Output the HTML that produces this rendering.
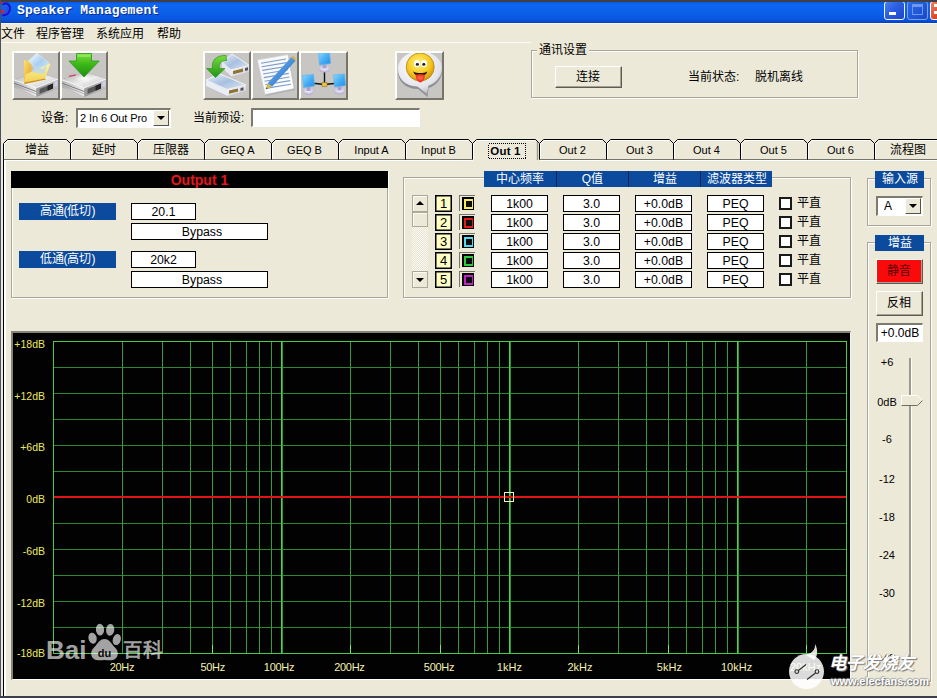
<!DOCTYPE html>
<html lang="zh-CN">
<head>
<meta charset="utf-8">
<title>Speaker Management</title>
<style>
*{box-sizing:border-box;margin:0;padding:0}
html,body{width:937px;height:698px;overflow:hidden}
body{position:relative;background:#ece9d8;font-family:"Liberation Sans",sans-serif;font-size:12px;color:#000}
.a{position:absolute}
.t{position:absolute;white-space:nowrap;line-height:1}
#top{left:0;top:0;width:937px;height:2px;background:#3d4046}
#left{left:0;top:0;width:1px;height:698px;background:#4a5060}
#bot{left:0;top:696px;width:937px;height:2px;background:#3b4049}
#title{left:1px;top:2px;width:936px;height:21px;background:linear-gradient(#0a58e0 0,#0e66f2 12%,#0c60ea 45%,#0a5ae2 76%,#084ed2 90%,#0740b8 100%)}
#ttext{left:17px;top:4px;font-family:"Liberation Mono",monospace;font-weight:bold;font-size:13px;color:#fff;letter-spacing:0.1px;text-shadow:1px 1px 0 #0a2a8a}
.menu{top:28px;font-size:12px}
.grp{position:absolute;border:1px solid #aaa798;box-shadow:1px 1px 0 #fff, inset 1px 1px 0 #fff}
.blue{position:absolute;background:#0b4a9c;color:#fff;text-align:center;font-size:12px;line-height:16px;white-space:nowrap;overflow:hidden}
.fld{position:absolute;background:#fff;border:1px solid #000;text-align:center;font-size:12.3px;line-height:16px;white-space:nowrap;overflow:hidden}
.tbtn{position:absolute;background:#c7c6c2;border-top:2px solid #fdfdfb;border-left:2px solid #fdfdfb;border-right:2px solid #77756a;border-bottom:2px solid #77756a;overflow:hidden}
.tabt{position:absolute;top:143px;width:67px;text-align:center;font-size:12px;line-height:14px;white-space:nowrap}
.sunk{position:absolute;background:#fff;border-top:2px solid #7d7b70;border-left:2px solid #7d7b70;border-right:1px solid #fff;border-bottom:1px solid #fff}
.btn{position:absolute;background:#ece9d8;border-top:1px solid #fff;border-left:1px solid #fff;border-right:1px solid #5e5c52;border-bottom:1px solid #5e5c52;box-shadow:inset -1px -1px 0 #a5a294}
.sb{position:absolute;background:#ece9d8;border:1px solid #aca999;box-shadow:inset 1px 1px 0 #fbfaf4}
</style>
</head>
<body>
<div class="a" id="title"></div>
<svg class="a" style="left:1px;top:2px" width="13" height="17" viewBox="1 2 13 17"><path d="M3.2 4.2C7 2.2 10.4 5 9.9 9.2C9.5 12.8 6.8 15.6 3 15.2" fill="none" stroke="#1a14cc" stroke-width="2.1" stroke-linecap="round"/><path d="M5.5 6.5C7.5 7 8 9.5 7 11.5C6 13 5 13.5 4 13.6" fill="none" stroke="#2a48e8" stroke-width="1.2"/><ellipse cx="2.8" cy="11.4" rx="2" ry="1.7" fill="#e01838"/><ellipse cx="2" cy="2.9" rx="1.4" ry=".8" fill="#d01848"/></svg>
<div class="t" id="ttext">Speaker Management</div>
<div class="a" style="left:884px;top:1px;width:21px;height:19px;border:1px solid #f0f4ff;border-radius:3px;background:linear-gradient(135deg,#4a80f4 0,#2a5ee0 45%,#1c48c8 100%)"></div>
<div class="a" style="left:889px;top:12px;width:7px;height:3px;background:#fff"></div>
<div class="a" style="left:907px;top:1px;width:21px;height:19px;border:1px solid #7aa2f0;border-radius:3px;background:linear-gradient(135deg,#2a6ae8 0,#1f56d8 60%,#1848c4 100%)"></div>
<div class="a" style="left:912px;top:4px;width:11px;height:11px;border:1px solid #6f98ec;border-top:3px solid #6f98ec"></div>
<div class="a" style="left:930px;top:1px;width:21px;height:19px;border:1px solid #fff;border-radius:3px;background:linear-gradient(135deg,#f08060 0,#e04c28 50%,#c03010 100%)"></div>
<div class="a" style="left:934px;top:4px;width:3px;height:3px;background:#fff"></div><div class="a" style="left:934px;top:11px;width:3px;height:3px;background:#fff"></div>
<div class="a" id="top"></div>
<div class="a" style="left:1px;top:23px;width:936px;height:1px;background:#f4f6fb"></div>
<div class="t menu" style="left:1px">文件</div>
<div class="t menu" style="left:36px">程序管理</div>
<div class="t menu" style="left:96px">系统应用</div>
<div class="t menu" style="left:157px">帮助</div>
<div class="a" style="left:1px;top:42px;width:530px;height:1px;background:#fbfaf4"></div>
<div class="tbtn" style="left:12px;top:51px;width:48px;height:49px"><svg style="position:absolute;left:0;top:0" width="44" height="45" viewBox="0 0 44 45"><defs>
<linearGradient id="dtop" x1="0" y1="0" x2="1" y2="1"><stop offset="0" stop-color="#a8a8a8"/><stop offset=".55" stop-color="#ececec"/><stop offset="1" stop-color="#c4c4c4"/></linearGradient>
<linearGradient id="dleft" x1="0" y1="0" x2="1" y2="0"><stop offset="0" stop-color="#b4b4b4"/><stop offset="1" stop-color="#efefef"/></linearGradient>
<linearGradient id="dright" x1="0" y1="0" x2="1" y2="0"><stop offset="0" stop-color="#9a9a9a"/><stop offset="1" stop-color="#c4c4c8"/></linearGradient>
<linearGradient id="fold1" x1="0" y1="0" x2="1" y2="1"><stop offset="0" stop-color="#fbe070"/><stop offset="1" stop-color="#e89c18"/></linearGradient>
<linearGradient id="fold2" x1="0" y1="0" x2="0" y2="1"><stop offset="0" stop-color="#fff6a8"/><stop offset="1" stop-color="#f0d050"/></linearGradient>
<linearGradient id="pap" x1="0" y1="0" x2="1" y2="1"><stop offset="0" stop-color="#ffffff"/><stop offset=".5" stop-color="#a8d0f0"/><stop offset="1" stop-color="#d8ecfa"/></linearGradient>
</defs>
<g id="drv">
<path d="M0 26.5L22.5 19L44 26L44 35L22.5 43.8L0 34Z" fill="#8e8e8e"/>
<path d="M0 26.5L22.5 19L44 26L22.5 34.8Z" fill="url(#dtop)"/>
<path d="M0 26.8L22.5 34.8V43.8L0 34Z" fill="url(#dleft)"/>
<path d="M22.5 34.8L44 26V35L22.5 43.8Z" fill="url(#dright)"/>
<path d="M25.5 36L39 30.6V35.6L25.5 41Z" fill="#5a5a5a"/>
<path d="M33.5 32.8L39 30.6V35.6L33.5 37.800Z" fill="#262626"/>
<path d="M0 30.2L22.5 38.6" stroke="#707070" stroke-width=".9" fill="none"/>
<path d="M1 32.6L22.5 41" stroke="#9a9a9a" stroke-width=".7" fill="none"/>
<path d="M0 26.8L22.5 34.8L44 26" stroke="#fafafa" stroke-width="1" fill="none"/>
<path d="M40.5 29L43.5 27.8V32.8L40.5 34Z" fill="#d0d0ec"/>
</g>

<path d="M10 7L16.5 8.2L18.5 24.5L10 29Z" fill="url(#fold1)"/>
<path d="M23 0L35 10.2L26 19.5L14.5 8Z" fill="url(#pap)" stroke="#e8f0f8" stroke-width=".6"/>
<path d="M11.5 21.5L36.5 10.5L31 25.5L10 29.5Z" fill="url(#fold2)"/>
<path d="M17 19L23 12L28 16.5L33 12.2L30 21Z" fill="#b8d8f0" opacity=".8"/>
<path d="M10 29.5L31 25.5L32 26.5L10.5 31Z" fill="#d09010"/>
</svg>
</div>
<div class="tbtn" style="left:60px;top:51px;width:48px;height:49px"><svg style="position:absolute;left:0;top:0" width="44" height="45" viewBox="0 0 44 45"><defs>
<linearGradient id="garr" x1="0" y1="0" x2="0" y2="1"><stop offset="0" stop-color="#7ee040"/><stop offset=".45" stop-color="#3cb818"/><stop offset="1" stop-color="#1f9010"/></linearGradient>
<radialGradient id="glow" cx=".5" cy=".5" r=".5"><stop offset="0" stop-color="#fff" stop-opacity=".9"/><stop offset="1" stop-color="#fff" stop-opacity="0"/></radialGradient>
</defs>
<use href="#drv"/>
<ellipse cx="22" cy="25.500" rx="10" ry="4" fill="url(#glow)"/>
<path d="M7 23.3L13.8 21.9" stroke="#d04060" stroke-width="1.3"/>
<path d="M14.5 0.5H29.5V8H37.2L22 24L7 8H14.5Z" fill="url(#garr)" stroke="#2a9818" stroke-width=".8"/>
<path d="M15.5 1.5H28.5V4H15.5Z" fill="#a0f070" opacity=".6"/>
</svg>
</div>
<div class="tbtn" style="left:203px;top:51px;width:48px;height:49px"><svg style="position:absolute;left:0;top:0" width="44" height="45" viewBox="0 0 44 45"><defs>
<linearGradient id="wbox" x1="0" y1="0" x2="1" y2="1"><stop offset="0" stop-color="#ffffff"/><stop offset="1" stop-color="#c8c8d8"/></linearGradient>
<linearGradient id="wtop" x1="0" y1="0" x2="1" y2="1"><stop offset="0" stop-color="#e8eef8"/><stop offset=".5" stop-color="#a8c0e0"/><stop offset="1" stop-color="#e0e8f4"/></linearGradient>
<linearGradient id="garr2" x1="0" y1="0" x2="0" y2="1"><stop offset="0" stop-color="#78dc40"/><stop offset="1" stop-color="#1f9414"/></linearGradient>
</defs>
<g>
<path d="M17 9L27 1L44.5 12.5V19L25 23.5L17 15Z" fill="#b0b0c0"/>
<path d="M17 9L27 1L44.5 12.5L26 17Z" fill="url(#wtop)" stroke="#fff" stroke-width=".8"/>
<path d="M17 9L26 17V23.5L17 15Z" fill="#e8e8f0"/>
<path d="M26 17L44.5 12.5V19L26 23.5Z" fill="url(#wbox)"/>
<path d="M28 18L38 15.6V18.8L28 21.2Z" fill="#8a7430"/>
<path d="M40 15L43 14.3V17.3L40 18Z" fill="#555"/>
</g>
<g>
<path d="M1 27L15 21L41 32V38L21 43L1 33Z" fill="#a8a8b8"/>
<path d="M1 27L15 21L41 32L22 36.5Z" fill="url(#wtop)" stroke="#fff" stroke-width=".8"/>
<path d="M1 27L22 36.5V43L1 33Z" fill="#ececf4"/>
<path d="M22 36.5L41 32V38L22 43Z" fill="url(#wbox)"/>
<path d="M24 37.6L33 35.4V38.6L24 40.8Z" fill="#8a7430"/>
<path d="M35.5 35L38.5 34.3V37.3L35.5 38Z" fill="#555"/>
</g>
<path d="M21 2.5C11 2 6 8 7.5 15.5H1.5L10.5 24.5L20 15.5H14.5C13.5 10.5 16 7.5 21.5 7.5Z" fill="url(#garr2)" stroke="#2a9818" stroke-width=".7"/>
</svg>
</div>
<div class="tbtn" style="left:251px;top:51px;width:48px;height:49px"><svg style="position:absolute;left:0;top:0" width="44" height="45" viewBox="0 0 44 45"><defs>
<linearGradient id="ppr" x1="0" y1="0" x2="1" y2="1"><stop offset="0" stop-color="#f4f6fa"/><stop offset="1" stop-color="#ffffff"/></linearGradient>
<linearGradient id="pen" x1="0" y1="0" x2="1" y2="1"><stop offset="0" stop-color="#92c6f4"/><stop offset=".5" stop-color="#4a90dc"/><stop offset="1" stop-color="#2a64b4"/></linearGradient>
</defs>
<path d="M5.5 8.5L36 3.5L42 37L13 43Z" fill="#9a9a9a" opacity=".5"/>
<path d="M4.3 6.8L35 1.6L41 35.6L12 41.6Z" fill="url(#ppr)" stroke="#c8c8d0" stroke-width=".6"/>
<g stroke="#7c9cc8" stroke-width="1.1">
<path d="M8 10.2L33 6"/><path d="M8.7 13.8L33.7 9.6"/><path d="M9.4 17.4L34.4 13.2"/><path d="M10.1 21L35.1 16.8"/><path d="M10.8 24.6L35.8 20.4"/><path d="M11.5 28.2L36.5 24"/><path d="M12.2 31.8L37.2 27.6"/><path d="M12.9 35.4L37.9 31.2"/>
</g>
<path d="M38.2 4.2L42.6 7.8L19 33.8L14.6 30.2Z" fill="url(#pen)"/>
<path d="M38.2 4.2C39.5 2 43.5 4.5 42.6 7.8Z" fill="#d8b040"/>
<path d="M14.6 30.2L19 33.8L12.8 36.2Z" fill="#d8b848"/>
<path d="M13.6 34.2L14.8 35.4L12.8 36.2Z" fill="#444"/>
</svg>
</div>
<div class="tbtn" style="left:299px;top:51px;width:49px;height:49px"><svg style="position:absolute;left:0;top:0" width="45" height="45" viewBox="0 0 45 45"><defs>
<linearGradient id="scr" x1="0" y1="0" x2="1" y2="1"><stop offset="0" stop-color="#90d8ff"/><stop offset=".5" stop-color="#48b0f4"/><stop offset="1" stop-color="#2488e0"/></linearGradient>
<radialGradient id="bse" cx=".5" cy=".4" r=".6"><stop offset="0" stop-color="#ffffff"/><stop offset="1" stop-color="#b0a8d0"/></radialGradient>
<g id="mon"><ellipse cx="0" cy="9.5" rx="6" ry="3.4" fill="url(#bse)"/><path d="M-2 5H2V9H-2Z" fill="#a8a0d0"/><path d="M-6 -6.5L5 -7.5L6 4L-5 5.5Z" fill="url(#scr)" stroke="#5ab4f4" stroke-width=".7"/></g>
</defs>
<path d="M23.5 17V31.5M10 30L23.5 31.5L38 30" stroke="#111" stroke-width="1.4" fill="none"/>
<rect x="21" y="29.5" width="5" height="4" fill="#e8c050" stroke="#a07818" stroke-width=".6"/>
<use href="#mon" x="23.5" y="6.5"/>
<use href="#mon" x="7.5" y="29"/>
<use href="#mon" x="38.5" y="28.5"/>
</svg>
</div>
<div class="tbtn" style="left:395px;top:51px;width:49px;height:49px"><svg style="position:absolute;left:0;top:0" width="45" height="45" viewBox="0 0 45 45"><defs>
<radialGradient id="bub" cx=".4" cy=".3" r=".8"><stop offset="0" stop-color="#ffffff"/><stop offset=".7" stop-color="#e4e4ec"/><stop offset="1" stop-color="#a8a8b0"/></radialGradient>
<radialGradient id="face" cx=".45" cy=".35" r=".7"><stop offset="0" stop-color="#fff27a"/><stop offset=".6" stop-color="#f6c820"/><stop offset="1" stop-color="#c88a08"/></radialGradient>
</defs>
<g transform="translate(0,1)">
<path d="M23 0C36 0 45 7.5 45 17C45 25 39 31.5 31.5 34L30.5 43L21 35C8 35 1 27 1 17.500C1 7.500 10 0 23 0Z" fill="#909094"/>
<path d="M23 -2.5C36 -2.5 45 5 45 14.5C45 22.5 39 29 31.5 31.5L30 40L20.5 32.5C8 32 1 24.5 1 15C1 5 10 -2.5 23 -2.5Z" fill="url(#bub)"/>
<circle cx="23.2" cy="13" r="14" fill="url(#face)" stroke="#b88810" stroke-width=".8"/>
<ellipse cx="20" cy="9.6" rx="3" ry="3.6" fill="#fff"/><ellipse cx="27" cy="9.6" rx="3" ry="3.6" fill="#fff"/>
<ellipse cx="20.4" cy="10.4" rx="1.6" ry="1.3" fill="#1a2030"/><ellipse cx="26.8" cy="10.4" rx="1.6" ry="1.3" fill="#1a2030"/>
<path d="M16.2 17.4C20 19.6 26.5 19.6 30.4 17.4C29.5 20.5 27 22 23.3 22C19.6 22 17 20.5 16.2 17.4Z" fill="#2a1408"/>
<path d="M18.8 20.8C21 20 25.5 20 27.8 20.8C28 25 26 28.4 23.3 28.4C20.6 28.4 18.6 25 18.8 20.8Z" fill="#f03c28"/>
<path d="M20.5 22.5C22 22 24.5 22 26 22.5C26 24.5 25 26 23.3 26C21.6 26 20.5 24.5 20.5 22.5Z" fill="#ff6848" opacity=".8"/>
</g></svg>
</div>
<div class="grp" style="left:531px;top:50px;width:327px;height:48px"></div>
<div class="t" style="left:537px;top:44px;background:#ece9d8;padding:0 2px;font-size:12px">通讯设置</div>
<div class="btn" style="left:555px;top:66px;width:67px;height:22px"></div>
<div class="t" style="left:555px;top:71px;width:66px;text-align:center;font-size:12px">连接</div>
<div class="t" style="left:688px;top:71px;font-size:12px">当前状态:</div>
<div class="t" style="left:755px;top:71px;font-size:12px">脱机离线</div>
<div class="t" style="left:41px;top:112px;font-size:12px">设备:</div>
<div class="sunk" style="left:76px;top:108px;width:95px;height:20px"></div>
<div class="t" style="left:80px;top:113px;font-size:11px;letter-spacing:-0.1px">2 In 6 Out Pro</div>
<div class="a" style="left:153px;top:110px;width:16px;height:16px;background:#ece9d8;border-top:1px solid #fff;border-left:1px solid #fff;border-right:1px solid #55534a;border-bottom:1px solid #55534a"></div>
<div class="a" style="left:157px;top:116px;width:0;height:0;border-left:4px solid transparent;border-right:4px solid transparent;border-top:4px solid #000"></div>
<div class="t" style="left:193px;top:112px;font-size:12px">当前预设:</div>
<div class="sunk" style="left:251px;top:108px;width:169px;height:19px"></div>
<div class="a" style="left:3px;top:159px;width:1px;height:537px;background:#000"></div><div class="a" style="left:4px;top:160px;width:2px;height:536px;background:#fff"></div>
<svg class="a" style="left:0;top:136px" width="937" height="26" viewBox="0 136 937 26">
<path d="M3.5 162V159.5H472M539 159.5H937" fill="none" stroke="#000" stroke-width="1"/>
<path d="M4.5 162V160.5H473M540 160.5H937" fill="none" stroke="#fff" stroke-width="1"/>
<path d="M3.5 159.5V143.5L7.5 139.5H66.5L70.5 143.5V159.5" fill="#ece9d8" stroke="#000"/>
<path d="M4.5 159V144L8 140.5H66" fill="none" stroke="#fff"/>
<path d="M70.5 159.5V143.5L74.5 139.5H133.5L137.5 143.5V159.5" fill="#ece9d8" stroke="#000"/>
<path d="M71.5 159V144L75 140.5H133" fill="none" stroke="#fff"/>
<path d="M137.5 159.5V143.5L141.5 139.5H200.5L204.5 143.5V159.5" fill="#ece9d8" stroke="#000"/>
<path d="M138.5 159V144L142 140.5H200" fill="none" stroke="#fff"/>
<path d="M204.5 159.5V143.5L208.5 139.5H267.5L271.5 143.5V159.5" fill="#ece9d8" stroke="#000"/>
<path d="M205.5 159V144L209 140.5H267" fill="none" stroke="#fff"/>
<path d="M271.5 159.5V143.5L275.5 139.5H334.5L338.5 143.5V159.5" fill="#ece9d8" stroke="#000"/>
<path d="M272.5 159V144L276 140.5H334" fill="none" stroke="#fff"/>
<path d="M338.5 159.5V143.5L342.5 139.5H401.5L405.5 143.5V159.5" fill="#ece9d8" stroke="#000"/>
<path d="M339.5 159V144L343 140.5H401" fill="none" stroke="#fff"/>
<path d="M405.5 159.5V143.5L409.5 139.5H468.5L472.5 143.5V159.5" fill="#ece9d8" stroke="#000"/>
<path d="M406.5 159V144L410 140.5H468" fill="none" stroke="#fff"/>
<path d="M472.5 160V143.5L476.5 139.5H535.5L539.5 143.5V160" fill="#ece9d8" stroke="none"/>
<path d="M472.5 159.5V143.5L476.5 139.5H535.5L539.5 143.5" fill="none" stroke="#000"/>
<path d="M473.5 160V144L477 140.5H535" fill="none" stroke="#fff"/>
<path d="M537.5 142V160" fill="none" stroke="#9d9a8c" stroke-width="1.4"/>
<path d="M539.5 159.5V143.5L543.5 139.5H602.5L606.5 143.5V159.5" fill="#ece9d8" stroke="#000"/>
<path d="M540.5 159V144L544 140.5H602" fill="none" stroke="#fff"/>
<path d="M606.5 159.5V143.5L610.5 139.5H669.5L673.5 143.5V159.5" fill="#ece9d8" stroke="#000"/>
<path d="M607.5 159V144L611 140.5H669" fill="none" stroke="#fff"/>
<path d="M673.5 159.5V143.5L677.5 139.5H736.5L740.5 143.5V159.5" fill="#ece9d8" stroke="#000"/>
<path d="M674.5 159V144L678 140.5H736" fill="none" stroke="#fff"/>
<path d="M740.5 159.5V143.5L744.5 139.5H803.5L807.5 143.5V159.5" fill="#ece9d8" stroke="#000"/>
<path d="M741.5 159V144L745 140.5H803" fill="none" stroke="#fff"/>
<path d="M807.5 159.5V143.5L811.5 139.5H870.5L874.5 143.5V159.5" fill="#ece9d8" stroke="#000"/>
<path d="M808.5 159V144L812 140.5H870" fill="none" stroke="#fff"/>
<path d="M874.5 159.5V143.5L878.5 139.5H937.5L941.5 143.5V159.5" fill="#ece9d8" stroke="#000"/>
<path d="M875.5 159V144L879 140.5H937" fill="none" stroke="#fff"/>
<rect x="488.5" y="143.5" width="37" height="15" fill="none" stroke="#000" stroke-dasharray="1 1" shape-rendering="crispEdges"/>
</svg>
<div class="tabt" style="left:3px;font-size:12px">增益</div>
<div class="tabt" style="left:70px;font-size:12px">延时</div>
<div class="tabt" style="left:137px;font-size:12px">压限器</div>
<div class="tabt" style="left:204px;font-size:11px">GEQ A</div>
<div class="tabt" style="left:271px;font-size:11px">GEQ B</div>
<div class="tabt" style="left:338px;font-size:11px">Input A</div>
<div class="tabt" style="left:405px;font-size:11px">Input B</div>
<div class="tabt" style="left:472px;font-weight:bold;top:144px;font-size:11.5px;letter-spacing:.2px">Out 1</div>
<div class="tabt" style="left:539px;font-size:11px">Out 2</div>
<div class="tabt" style="left:606px;font-size:11px">Out 3</div>
<div class="tabt" style="left:673px;font-size:11px">Out 4</div>
<div class="tabt" style="left:740px;font-size:11px">Out 5</div>
<div class="tabt" style="left:807px;font-size:11px">Out 6</div>
<div class="tabt" style="left:874px;font-size:12px">流程图</div>
<div class="grp" style="left:11px;top:171px;width:377px;height:127px"></div>
<div class="a" style="left:11px;top:171px;width:377px;height:17px;background:#000"></div>
<div class="t" style="left:11px;top:173px;width:377px;text-align:center;color:#e8141c;font-weight:bold;font-size:14px">Output 1</div>
<div class="blue" style="left:19px;top:203px;width:97px;height:17px">高通(低切)</div>
<div class="fld" style="left:131px;top:203px;width:65px;height:17px">20.1</div>
<div class="fld" style="left:131px;top:223px;width:137px;height:17px;padding-left:5px">Bypass</div>
<div class="blue" style="left:19px;top:251px;width:97px;height:17px">低通(高切)</div>
<div class="fld" style="left:131px;top:251px;width:65px;height:17px">20k2</div>
<div class="fld" style="left:131px;top:271px;width:137px;height:17px;padding-left:5px">Bypass</div>
<div class="grp" style="left:403px;top:177px;width:448px;height:121px"></div>
<div class="blue" style="left:484px;top:171px;width:72px;height:16px">中心频率</div>
<div class="blue" style="left:556px;top:171px;width:72px;height:16px;border-left:1px solid #04214f">Q值</div>
<div class="blue" style="left:628px;top:171px;width:72px;height:16px;border-left:1px solid #04214f">增益</div>
<div class="blue" style="left:700px;top:171px;width:72px;height:16px;border-left:1px solid #04214f">滤波器类型</div>
<div class="a" style="left:435px;top:195px;width:17px;height:17px;background:#ffffc4;border:1px solid #000;box-shadow:inset 0 0 0 .5px #000;text-align:center;font-size:13px;line-height:15px">1</div>
<div class="a" style="left:459px;top:195px;width:16px;height:16px;border-top:1px solid #77756a;border-left:1px solid #77756a"></div>
<div class="a" style="left:462px;top:197px;width:12px;height:13px;background:#000"></div><div class="a" style="left:464px;top:199px;width:9px;height:10px;background:#f6ea5a"></div><div class="a" style="left:466px;top:201px;width:6px;height:6px;background:#0c0c10"></div>
<div class="fld" style="left:491px;top:195px;width:57px;height:17px">1k00</div>
<div class="fld" style="left:563px;top:195px;width:57px;height:17px">3.0</div>
<div class="fld" style="left:635px;top:195px;width:57px;height:17px">+0.0dB</div>
<div class="fld" style="left:707px;top:195px;width:57px;height:17px">PEQ</div>
<div class="a" style="left:779px;top:197px;width:13px;height:13px;background:#fff;border:2px solid #1a1a1a"></div>
<div class="t" style="left:797px;top:197px;font-size:12px">平直</div>
<div class="a" style="left:435px;top:214px;width:17px;height:17px;background:#ffffc4;border:1px solid #000;box-shadow:inset 0 0 0 .5px #000;text-align:center;font-size:13px;line-height:15px">2</div>
<div class="a" style="left:459px;top:214px;width:16px;height:16px;border-top:1px solid #77756a;border-left:1px solid #77756a"></div>
<div class="a" style="left:462px;top:216px;width:12px;height:13px;background:#000"></div><div class="a" style="left:464px;top:218px;width:9px;height:10px;background:#e41a1a"></div><div class="a" style="left:466px;top:220px;width:6px;height:6px;background:#0c0c10"></div>
<div class="fld" style="left:491px;top:214px;width:57px;height:17px">1k00</div>
<div class="fld" style="left:563px;top:214px;width:57px;height:17px">3.0</div>
<div class="fld" style="left:635px;top:214px;width:57px;height:17px">+0.0dB</div>
<div class="fld" style="left:707px;top:214px;width:57px;height:17px">PEQ</div>
<div class="a" style="left:779px;top:216px;width:13px;height:13px;background:#fff;border:2px solid #1a1a1a"></div>
<div class="t" style="left:797px;top:216px;font-size:12px">平直</div>
<div class="a" style="left:435px;top:233px;width:17px;height:17px;background:#ffffc4;border:1px solid #000;box-shadow:inset 0 0 0 .5px #000;text-align:center;font-size:13px;line-height:15px">3</div>
<div class="a" style="left:459px;top:233px;width:16px;height:16px;border-top:1px solid #77756a;border-left:1px solid #77756a"></div>
<div class="a" style="left:462px;top:235px;width:12px;height:13px;background:#000"></div><div class="a" style="left:464px;top:237px;width:9px;height:10px;background:#4cdcec"></div><div class="a" style="left:466px;top:239px;width:6px;height:6px;background:#0c0c10"></div>
<div class="fld" style="left:491px;top:233px;width:57px;height:17px">1k00</div>
<div class="fld" style="left:563px;top:233px;width:57px;height:17px">3.0</div>
<div class="fld" style="left:635px;top:233px;width:57px;height:17px">+0.0dB</div>
<div class="fld" style="left:707px;top:233px;width:57px;height:17px">PEQ</div>
<div class="a" style="left:779px;top:235px;width:13px;height:13px;background:#fff;border:2px solid #1a1a1a"></div>
<div class="t" style="left:797px;top:235px;font-size:12px">平直</div>
<div class="a" style="left:435px;top:252px;width:17px;height:17px;background:#ffffc4;border:1px solid #000;box-shadow:inset 0 0 0 .5px #000;text-align:center;font-size:13px;line-height:15px">4</div>
<div class="a" style="left:459px;top:252px;width:16px;height:16px;border-top:1px solid #77756a;border-left:1px solid #77756a"></div>
<div class="a" style="left:462px;top:254px;width:12px;height:13px;background:#000"></div><div class="a" style="left:464px;top:256px;width:9px;height:10px;background:#2acc3a"></div><div class="a" style="left:466px;top:258px;width:6px;height:6px;background:#0c0c10"></div>
<div class="fld" style="left:491px;top:252px;width:57px;height:17px">1k00</div>
<div class="fld" style="left:563px;top:252px;width:57px;height:17px">3.0</div>
<div class="fld" style="left:635px;top:252px;width:57px;height:17px">+0.0dB</div>
<div class="fld" style="left:707px;top:252px;width:57px;height:17px">PEQ</div>
<div class="a" style="left:779px;top:254px;width:13px;height:13px;background:#fff;border:2px solid #1a1a1a"></div>
<div class="t" style="left:797px;top:254px;font-size:12px">平直</div>
<div class="a" style="left:435px;top:271px;width:17px;height:17px;background:#ffffc4;border:1px solid #000;box-shadow:inset 0 0 0 .5px #000;text-align:center;font-size:13px;line-height:15px">5</div>
<div class="a" style="left:459px;top:271px;width:16px;height:16px;border-top:1px solid #77756a;border-left:1px solid #77756a"></div>
<div class="a" style="left:462px;top:273px;width:12px;height:13px;background:#000"></div><div class="a" style="left:464px;top:275px;width:9px;height:10px;background:#c422c4"></div><div class="a" style="left:466px;top:277px;width:6px;height:6px;background:#0c0c10"></div>
<div class="fld" style="left:491px;top:271px;width:57px;height:17px">1k00</div>
<div class="fld" style="left:563px;top:271px;width:57px;height:17px">3.0</div>
<div class="fld" style="left:635px;top:271px;width:57px;height:17px">+0.0dB</div>
<div class="fld" style="left:707px;top:271px;width:57px;height:17px">PEQ</div>
<div class="a" style="left:779px;top:273px;width:13px;height:13px;background:#fff;border:2px solid #1a1a1a"></div>
<div class="t" style="left:797px;top:273px;font-size:12px">平直</div>
<div class="a" style="left:412px;top:195px;width:16px;height:92px;background-image:repeating-conic-gradient(#fbfaf5 0 25%,#e6e3d3 0 50%);background-size:2px 2px"></div>
<div class="sb" style="left:412px;top:195px;width:16px;height:17px"></div>
<div class="a" style="left:416px;top:201px;width:0;height:0;border-left:4px solid transparent;border-right:4px solid transparent;border-bottom:4px solid #000"></div>
<div class="sb" style="left:412px;top:212px;width:16px;height:15px"></div>
<div class="sb" style="left:412px;top:271px;width:16px;height:17px"></div>
<div class="a" style="left:416px;top:278px;width:0;height:0;border-left:4px solid transparent;border-right:4px solid transparent;border-top:4px solid #000"></div>
<div class="a" style="left:11px;top:331px;width:840px;height:349px;background:#020203;border-top:2px solid #858378;border-left:2px solid #858378;border-right:1px solid #f6f5ee;border-bottom:1px solid #fff"></div>
<svg class="a" style="left:0;top:330px" width="860" height="355" viewBox="0 330 860 355" shape-rendering="crispEdges">
<line x1="53" x2="846" y1="367.5" y2="367.5" stroke="#2c8733"/>
<line x1="53" x2="846" y1="393.5" y2="393.5" stroke="#2c8733"/>
<line x1="53" x2="846" y1="419.5" y2="419.5" stroke="#2c8733"/>
<line x1="53" x2="846" y1="445.5" y2="445.5" stroke="#2c8733"/>
<line x1="53" x2="846" y1="471.5" y2="471.5" stroke="#2c8733"/>
<line x1="53" x2="846" y1="523.5" y2="523.5" stroke="#2c8733"/>
<line x1="53" x2="846" y1="549.5" y2="549.5" stroke="#2c8733"/>
<line x1="53" x2="846" y1="575.5" y2="575.5" stroke="#2c8733"/>
<line x1="53" x2="846" y1="601.5" y2="601.5" stroke="#2c8733"/>
<line x1="53" x2="846" y1="627.5" y2="627.5" stroke="#2c8733"/>
<line x1="122.5" x2="122.5" y1="341" y2="653" stroke="#359c3b"/>
<line x1="162.5" x2="162.5" y1="341" y2="653" stroke="#359c3b"/>
<line x1="190.5" x2="190.5" y1="341" y2="653" stroke="#359c3b"/>
<line x1="212.5" x2="212.5" y1="341" y2="653" stroke="#359c3b"/>
<line x1="230.5" x2="230.5" y1="341" y2="653" stroke="#359c3b"/>
<line x1="246.5" x2="246.5" y1="341" y2="653" stroke="#359c3b"/>
<line x1="259.5" x2="259.5" y1="341" y2="653" stroke="#359c3b"/>
<line x1="271.5" x2="271.5" y1="341" y2="653" stroke="#359c3b"/>
<line x1="281.5" x2="281.5" y1="341" y2="653" stroke="#48d848"/>
<line x1="282.5" x2="282.5" y1="341" y2="653" stroke="#2b9232"/>
<line x1="350.5" x2="350.5" y1="341" y2="653" stroke="#359c3b"/>
<line x1="390.5" x2="390.5" y1="341" y2="653" stroke="#359c3b"/>
<line x1="418.5" x2="418.5" y1="341" y2="653" stroke="#359c3b"/>
<line x1="440.5" x2="440.5" y1="341" y2="653" stroke="#359c3b"/>
<line x1="458.5" x2="458.5" y1="341" y2="653" stroke="#359c3b"/>
<line x1="474.5" x2="474.5" y1="341" y2="653" stroke="#359c3b"/>
<line x1="487.5" x2="487.5" y1="341" y2="653" stroke="#359c3b"/>
<line x1="499.5" x2="499.5" y1="341" y2="653" stroke="#359c3b"/>
<line x1="509.5" x2="509.5" y1="341" y2="653" stroke="#48d848"/>
<line x1="510.5" x2="510.5" y1="341" y2="653" stroke="#2b9232"/>
<line x1="578.5" x2="578.5" y1="341" y2="653" stroke="#359c3b"/>
<line x1="618.5" x2="618.5" y1="341" y2="653" stroke="#359c3b"/>
<line x1="646.5" x2="646.5" y1="341" y2="653" stroke="#359c3b"/>
<line x1="668.5" x2="668.5" y1="341" y2="653" stroke="#359c3b"/>
<line x1="686.5" x2="686.5" y1="341" y2="653" stroke="#359c3b"/>
<line x1="702.5" x2="702.5" y1="341" y2="653" stroke="#359c3b"/>
<line x1="715.5" x2="715.5" y1="341" y2="653" stroke="#359c3b"/>
<line x1="727.5" x2="727.5" y1="341" y2="653" stroke="#359c3b"/>
<line x1="737.5" x2="737.5" y1="341" y2="653" stroke="#48d848"/>
<line x1="738.5" x2="738.5" y1="341" y2="653" stroke="#2b9232"/>
<line x1="806.5" x2="806.5" y1="341" y2="653" stroke="#359c3b"/>
<rect x="53.5" y="341.5" width="793" height="312" fill="none" stroke="#48cc48"/>
<line x1="212.5" x2="212.5" y1="645" y2="653" stroke="#74e874"/>
<line x1="350.5" x2="350.5" y1="645" y2="653" stroke="#74e874"/>
<line x1="440.5" x2="440.5" y1="645" y2="653" stroke="#74e874"/>
<line x1="578.5" x2="578.5" y1="645" y2="653" stroke="#74e874"/>
<line x1="668.5" x2="668.5" y1="645" y2="653" stroke="#74e874"/>
<line x1="806.5" x2="806.5" y1="645" y2="653" stroke="#74e874"/>
<rect x="54" y="496" width="792" height="2" fill="#e01414"/>
<rect x="504.5" y="492.5" width="9" height="9" fill="none" stroke="#f4f4b4"/>
</svg>
<div class="t" style="left:0;top:339px;width:45px;text-align:right;font-size:10.5px;color:#ece860">+18dB</div>
<div class="t" style="left:0;top:391px;width:45px;text-align:right;font-size:10.5px;color:#ece860">+12dB</div>
<div class="t" style="left:0;top:442px;width:45px;text-align:right;font-size:10.5px;color:#ece860">+6dB</div>
<div class="t" style="left:0;top:494px;width:45px;text-align:right;font-size:10.5px;color:#ece860">0dB</div>
<div class="t" style="left:0;top:546px;width:45px;text-align:right;font-size:10.5px;color:#ece860">-6dB</div>
<div class="t" style="left:0;top:598px;width:45px;text-align:right;font-size:10.5px;color:#ece860">-12dB</div>
<div class="t" style="left:0;top:648px;width:45px;text-align:right;font-size:10.5px;color:#ece860">-18dB</div>
<div class="t" style="left:91.9px;top:662px;width:60px;text-align:center;font-size:11px;letter-spacing:-.3px;color:#f4f2b0">20Hz</div>
<div class="t" style="left:182.7px;top:662px;width:60px;text-align:center;font-size:11px;letter-spacing:-.3px;color:#f4f2b0">50Hz</div>
<div class="t" style="left:249.0px;top:662px;width:60px;text-align:center;font-size:11px;letter-spacing:-.3px;color:#f4f2b0">100Hz</div>
<div class="t" style="left:319.4px;top:662px;width:60px;text-align:center;font-size:11px;letter-spacing:-.3px;color:#f4f2b0">200Hz</div>
<div class="t" style="left:409.0px;top:662px;width:60px;text-align:center;font-size:11px;letter-spacing:-.3px;color:#f4f2b0">500Hz</div>
<div class="t" style="left:479.4px;top:662px;width:60px;text-align:center;font-size:11px;letter-spacing:0;color:#f4f2b0">1kHz</div>
<div class="t" style="left:550.0px;top:662px;width:60px;text-align:center;font-size:11px;letter-spacing:0;color:#f4f2b0">2kHz</div>
<div class="t" style="left:639.4px;top:662px;width:60px;text-align:center;font-size:11px;letter-spacing:0;color:#f4f2b0">5kHz</div>
<div class="t" style="left:706.6px;top:662px;width:60px;text-align:center;font-size:11px;letter-spacing:0;color:#f4f2b0">10kHz</div>
<div class="t" style="left:775.5px;top:662px;width:60px;text-align:center;font-size:11px;letter-spacing:0;color:#f4f2b0">20kHz</div>
<div class="grp" style="left:867px;top:178px;width:64px;height:48px"></div>
<div class="blue" style="left:875px;top:171px;width:49px;height:17px">输入源</div>
<div class="sunk" style="left:876px;top:196px;width:47px;height:20px"></div>
<div class="t" style="left:884px;top:200px;font-size:12px">A</div>
<div class="a" style="left:905px;top:198px;width:16px;height:16px;background:#ece9d8;border-top:1px solid #fff;border-left:1px solid #fff;border-right:1px solid #55534a;border-bottom:1px solid #55534a"></div>
<div class="a" style="left:909px;top:204px;width:0;height:0;border-left:4px solid transparent;border-right:4px solid transparent;border-top:4px solid #000"></div>
<div class="grp" style="left:867px;top:242px;width:64px;height:440px"></div>
<div class="blue" style="left:875px;top:235px;width:49px;height:16px">增益</div>
<div class="btn" style="left:876px;top:259px;width:47px;height:25px;background:#fa0a0a"></div>
<div class="t" style="left:876px;top:265px;width:46px;text-align:center;font-size:12px;color:#5a0000">静音</div>
<div class="btn" style="left:876px;top:291px;width:47px;height:25px"></div>
<div class="t" style="left:876px;top:297px;width:46px;text-align:center;font-size:12px">反相</div>
<div class="sunk" style="left:876px;top:323px;width:47px;height:19px"></div>
<div class="t" style="left:877px;top:327px;width:46px;text-align:center;font-size:12px">+0.0dB</div>
<div class="a" style="left:909px;top:358px;width:3px;height:299px;background:#9d9a8c;border-right:1px solid #fff"></div>
<svg class="a" style="left:900px;top:394px" width="26" height="14" viewBox="0 0 26 14"><path d="M1.5 1.5H17.5L22.5 6.5L17.5 11.5H1.5Z" fill="#ece9d8" stroke="#fff"/><path d="M1.5 11.5H17.5L22.5 6.5" fill="none" stroke="#6f6d62"/></svg>
<div class="t" style="left:867px;top:357px;width:40px;text-align:center;font-size:11px">+6</div>
<div class="t" style="left:867px;top:397px;width:40px;text-align:center;font-size:11px">0dB</div>
<div class="t" style="left:867px;top:434px;width:40px;text-align:center;font-size:11px">-6</div>
<div class="t" style="left:867px;top:474px;width:40px;text-align:center;font-size:11px">-12</div>
<div class="t" style="left:867px;top:512px;width:40px;text-align:center;font-size:11px">-18</div>
<div class="t" style="left:867px;top:550px;width:40px;text-align:center;font-size:11px">-24</div>
<div class="t" style="left:867px;top:588px;width:40px;text-align:center;font-size:11px">-30</div>
<div class="t" style="left:867px;top:653px;width:40px;text-align:center;font-size:11px">-42</div>
<div class="t" style="left:46px;top:637px;font-size:26px;font-weight:bold;color:rgba(255,255,255,.64);letter-spacing:0">Bai</div>
<svg class="a" style="left:86px;top:622px" width="40" height="42" viewBox="86 622 40 42"><g fill="rgba(255,255,255,.64)"><ellipse cx="92.6" cy="638.2" rx="4.1" ry="5.6" transform="rotate(-14 92.6 638.2)"/><ellipse cx="100" cy="629.6" rx="4.1" ry="5.9" transform="rotate(-4 100 629.6)"/><ellipse cx="110.2" cy="629.8" rx="4.1" ry="5.9" transform="rotate(6 110.2 629.8)"/><ellipse cx="116.8" cy="639.6" rx="4" ry="5.6" transform="rotate(16 116.8 639.6)"/><path d="M104.5 639C109.5 639 111.5 644 115 647.5C119 651 118.5 656.5 115 659C111.5 661.3 108 660 104.5 660C101 660 97.500 661.3 94 659C90.5 656.500 90 651 94 647.5C97.500 644 99.500 639 104.500 639Z"/></g><text x="104.6" y="656.6" text-anchor="middle" font-family="Liberation Sans, sans-serif" font-weight="bold" font-size="11" fill="#0a0a0a">du</text></svg>
<div class="t" style="left:123px;top:641px;font-size:19.5px;font-weight:bold;color:rgba(255,255,255,.64)">百科</div>
<svg class="a" style="left:784px;top:640px" width="44" height="54" viewBox="784 640 44 54"><path d="M806.5 654C816.200 654 824 661.800 824 671.500C824 681.200 816.200 689 806.500 689C796.800 689 789 681.200 789 671.500C789 661.800 796.800 654 806.500 654Z" fill="rgba(255,255,255,.86)"/><path d="M806 655C812 653 815.500 650 815 644C818.500 650 817.500 657 814 660Z" fill="rgba(255,255,255,.86)"/><g fill="none" stroke="#2a2a2a" stroke-width="1.1"><circle cx="796.8" cy="671.6" r="1.9"/><circle cx="817" cy="671.6" r="1.9"/><path d="M798.500 670.500L806 664.500M815.500 673L807 679.500"/></g></svg>
<div class="t" style="left:829px;top:655px;font-size:17.3px;font-weight:bold;font-style:italic;color:#fff;text-shadow:1px 1px 1px #777,0 0 1px #999">电子发烧友</div>
<div class="t" style="left:831px;top:676px;font-size:11px;font-weight:bold;color:#fff;letter-spacing:0;text-shadow:1px 1px 1px #666,-1px 0 1px #999,0 -1px 1px #aaa">www.elecfans.com</div>
<div class="a" id="left"></div>
<div class="a" id="bot"></div>
</body>
</html>
